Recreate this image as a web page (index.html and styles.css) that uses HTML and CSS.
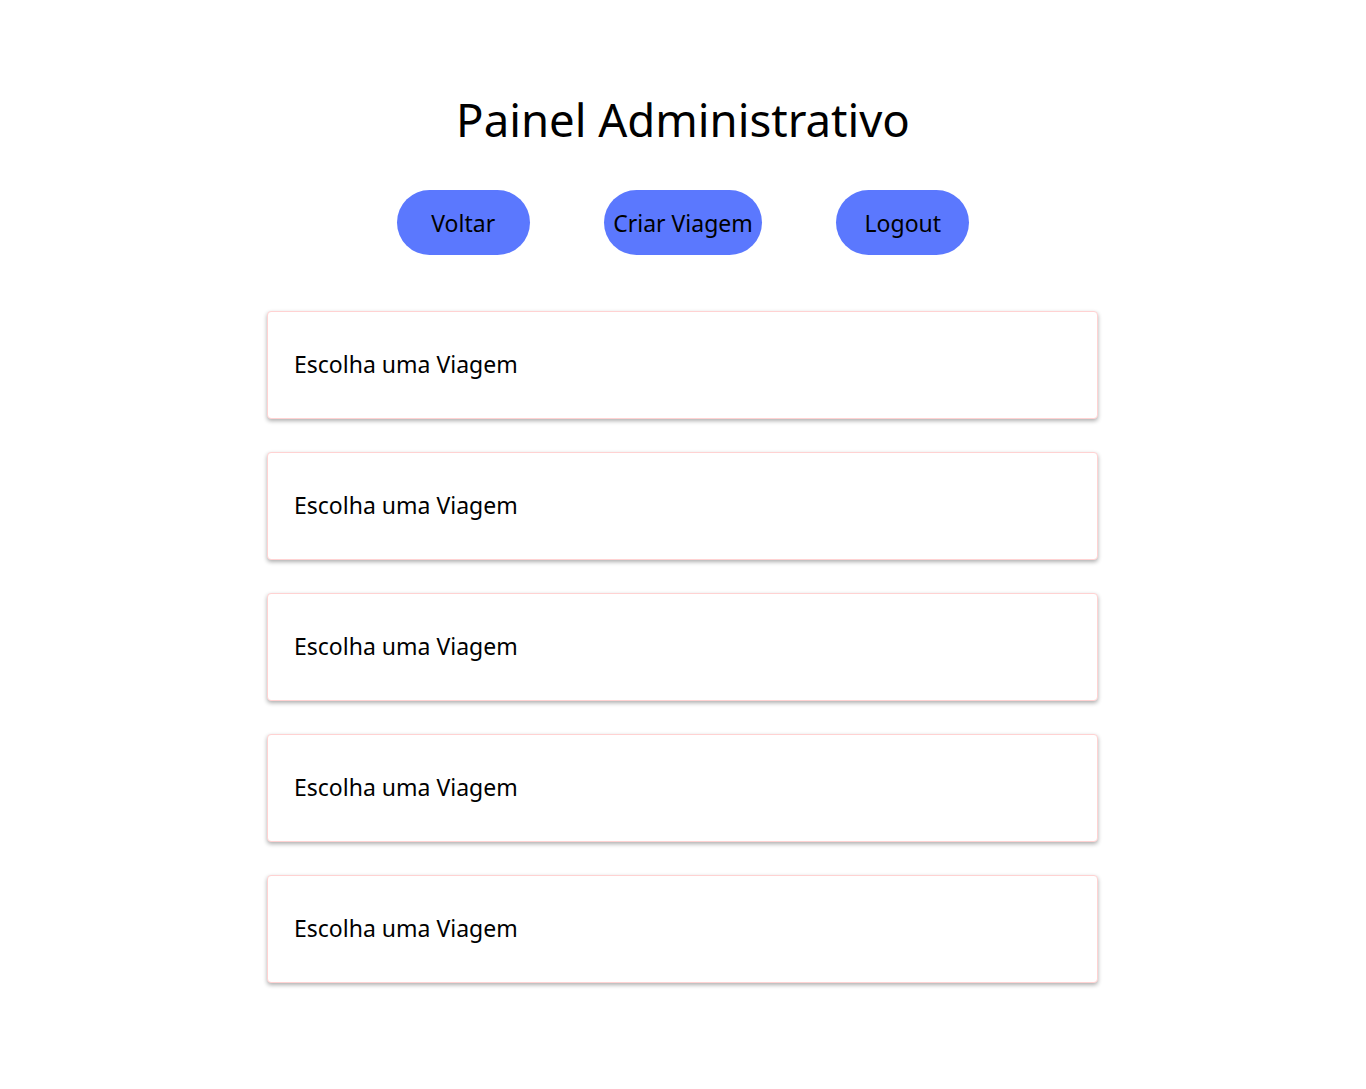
FILE: index.html
```html
<!DOCTYPE html>
<html lang="pt">
<head>
<meta charset="utf-8">
<title>Painel Administrativo</title>
<link rel="stylesheet" href="styles.css">
</head>
<body>
<main class="page">
  <h1 class="title">Painel Administrativo</h1>
  <nav class="actions">
    <button class="btn">Voltar</button>
    <button class="btn">Criar Viagem</button>
    <button class="btn">Logout</button>
  </nav>
  <section class="list">
    <div class="card">Escolha uma Viagem</div>
    <div class="card">Escolha uma Viagem</div>
    <div class="card">Escolha uma Viagem</div>
    <div class="card">Escolha uma Viagem</div>
    <div class="card">Escolha uma Viagem</div>
  </section>
</main>
</body>
</html>
```

FILE: styles.css
```css
* { box-sizing: border-box; }
html, body { margin: 0; padding: 0; background: #fff; }
body {
  font-family: "Noto Sans", "Open Sans", sans-serif;
  color: #000;
}
.page {
  display: flex;
  flex-direction: column;
  align-items: center;
  padding-top: 86px;
  padding-bottom: 80px;
}
.title {
  margin: 0;
  font-weight: 400;
  font-size: 45.5px;
  line-height: 66px;
}
.actions {
  display: flex;
  gap: 74px;
  margin-top: 38px;
}
.btn {
  min-width: 133px;
  height: 65px;
  padding: 0 9.5px;
  border: none;
  border-radius: 33px;
  background: #5b78fe;
  color: #000;
  font-family: inherit;
  font-size: 23px;
}
.list {
  display: flex;
  flex-direction: column;
  gap: 33px;
  width: 831px;
  margin-top: 56px;
  margin-left: -1px;
}
.card {
  height: 108px;
  flex: none;
  display: flex;
  align-items: center;
  padding-left: 26px;
  padding-bottom: 2px;
  background: #fff;
  border: 1px solid #ffd2d2;
  border-radius: 4px;
  box-shadow: 0 2px 4px rgba(0,0,0,0.32);
  font-size: 23px;
}
```
